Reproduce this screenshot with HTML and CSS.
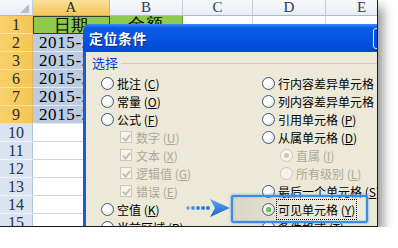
FILE: index.html
```html
<!DOCTYPE html>
<html>
<head>
<meta charset="utf-8">
<link rel="stylesheet" href="styles.css">
</head>
<body>
<div class="shot">
  <div class="sheet">
    <div class="hd corner"><span class="tri"></span></div>
    <div class="hd col sel">A</div>
    <div class="hd col">B</div>
    <div class="hd col">C</div>
    <div class="hd col">D</div>
    <div class="hd col">E</div>

    <div class="rh sel">1</div>
    <div class="c green boxed">日期</div>
    <div class="c green">金额</div>
    <div class="c"></div><div class="c"></div><div class="c"></div>

    <div class="rh sel">2</div>
    <div class="c selc">2015-2-1</div>
    <div class="c"></div><div class="c"></div><div class="c"></div><div class="c"></div>

    <div class="rh sel">3</div>
    <div class="c selc">2015-2-2</div>
    <div class="c"></div><div class="c"></div><div class="c"></div><div class="c"></div>

    <div class="rh sel">6</div>
    <div class="c selc">2015-2-5</div>
    <div class="c"></div><div class="c"></div><div class="c"></div><div class="c"></div>

    <div class="rh sel">7</div>
    <div class="c selc">2015-2-6</div>
    <div class="c"></div><div class="c"></div><div class="c"></div><div class="c"></div>

    <div class="rh sel">9</div>
    <div class="c selc">2015-2-8</div>
    <div class="c"></div><div class="c"></div><div class="c"></div><div class="c"></div>

    <div class="rh">10</div>
    <div class="c"></div><div class="c"></div><div class="c"></div><div class="c"></div><div class="c"></div>
    <div class="rh">11</div>
    <div class="c"></div><div class="c"></div><div class="c"></div><div class="c"></div><div class="c"></div>
    <div class="rh">12</div>
    <div class="c"></div><div class="c"></div><div class="c"></div><div class="c"></div><div class="c"></div>
    <div class="rh">13</div>
    <div class="c"></div><div class="c"></div><div class="c"></div><div class="c"></div><div class="c"></div>
    <div class="rh">14</div>
    <div class="c"></div><div class="c"></div><div class="c"></div><div class="c"></div><div class="c"></div>
    <div class="rh">15</div>
    <div class="c"></div><div class="c"></div><div class="c"></div><div class="c"></div><div class="c"></div>
  </div>

  <div class="dialog">
    <div class="title">
      <span class="title-text">定位条件</span>
      <span class="close"></span>
    </div>
    <div class="body">
      <div class="legend"><span class="legend-text">选择</span><span class="legend-line"></span></div>
      <div class="opts">
        <div class="col-left">
          <div class="opt"><span class="radio"></span><span>批注 (<u>C</u>)</span></div>
          <div class="opt"><span class="radio"></span><span>常量 (<u>O</u>)</span></div>
          <div class="opt"><span class="radio"></span><span>公式 (<u>F</u>)</span></div>
          <div class="opt sub dis"><span class="check"></span><span>数字 (<u>U</u>)</span></div>
          <div class="opt sub dis"><span class="check"></span><span>文本 (<u>X</u>)</span></div>
          <div class="opt sub dis"><span class="check"></span><span>逻辑值 (<u>G</u>)</span></div>
          <div class="opt sub dis"><span class="check"></span><span>错误 (<u>E</u>)</span></div>
          <div class="opt"><span class="radio"></span><span>空值 (<u>K</u>)</span></div>
          <div class="opt"><span class="radio"></span><span>当前区域 (<u>R</u>)</span></div>
        </div>
        <div class="col-right">
          <div class="opt"><span class="radio"></span><span>行内容差异单元格 (<u>W</u>)</span></div>
          <div class="opt"><span class="radio"></span><span>列内容差异单元格 (<u>M</u>)</span></div>
          <div class="opt"><span class="radio"></span><span>引用单元格 (<u>P</u>)</span></div>
          <div class="opt"><span class="radio"></span><span>从属单元格 (<u>D</u>)</span></div>
          <div class="opt sub2 dis"><span class="radio on-dis"></span><span>直属 (<u>I</u>)</span></div>
          <div class="opt sub2 dis"><span class="radio"></span><span>所有级别 (<u>L</u>)</span></div>
          <div class="opt"><span class="radio"></span><span>最后一个单元格 (<u>S</u>)</span></div>
          <div class="opt"><span class="radio on"></span><span class="focus">可见单元格 (<u>Y</u>)</span></div>
          <div class="opt"><span class="radio"></span><span>条件格式 (<u>T</u>)</span></div>
        </div>
      </div>
    </div>
  </div>

  <div class="callout"></div>
  <svg class="arrow" width="46" height="20" viewBox="0 0 46 20">
    <defs>
      <linearGradient id="ag" x1="0" y1="0" x2="0" y2="1">
        <stop offset="0" stop-color="#5aa6f0"/>
        <stop offset="1" stop-color="#1c64d4"/>
      </linearGradient>
    </defs>
    <circle cx="2" cy="10" r="1.8" fill="#5b9be6"/>
    <circle cx="7" cy="10" r="1.9" fill="#4a90e4"/>
    <circle cx="12" cy="10" r="2" fill="#3b86e0"/>
    <circle cx="17" cy="10" r="2" fill="#2f7cdc"/>
    <circle cx="22" cy="10" r="2" fill="#2a76da"/>
    <path d="M24 1 L44 10 L24 19 L29 10 Z" fill="url(#ag)"/>
  </svg>
</div>
</body>
</html>
```

FILE: styles.css
```css
html, body {
  margin: 0;
  padding: 0;
  background: #ffffff;
}

.shot {
  position: relative;
  box-sizing: border-box;
  width: 378px;
  height: 227px;
  overflow: hidden;
  border-right: 1px solid #1a1a1a;
  border-bottom: 1px solid #1a1a1a;
  box-shadow: 5px 7px 10px rgba(0, 0, 0, 0.42);
  background: #ffffff;
}

.sheet {
  display: grid;
  grid-template-columns: 33px 77px 73px 70px 73px 72px;
  grid-template-rows: 16px repeat(12, 18px);
  font-family: "Liberation Serif", serif;
  font-size: 17px;
  color: #000;
}

.sheet > div {
  box-sizing: border-box;
  border-right: 1px solid #d4d4d4;
  border-bottom: 1px solid #d4d4d4;
  overflow: hidden;
  white-space: nowrap;
  line-height: 17px;
}

.hd {
  background: linear-gradient(#f7f9fc, #e8edf4);
  border-right-color: #c4cddb !important;
  border-bottom-color: #a9b8cc !important;
  color: #2b3e57;
  font-size: 15px;
  line-height: 15px !important;
  text-align: center;
}

.corner {
  position: relative;
}

.tri {
  position: absolute;
  right: 3px;
  bottom: 2px;
  width: 0;
  height: 0;
  border-left: 9px solid transparent;
  border-bottom: 9px solid #b9bfc7;
}

.hd.sel {
  background: linear-gradient(#fbe09a, #f4c658);
  border-right-color: #e2b55a !important;
  border-bottom-color: #e2a94a !important;
  color: #2b2b2b;
}

.rh {
  background: #dae3ef;
  border-right-color: #b4c3d6 !important;
  border-bottom-color: #f2f5fa !important;
  color: #23374f;
  text-align: center;
  font-size: 16px;
}

.rh.sel {
  background: linear-gradient(90deg, #f8d06a, #f5c654);
  border-right-color: #e2b55a !important;
  border-bottom-color: #fbe2a4 !important;
  color: #2a2a2a;
}

.c {
  padding-left: 6px;
  letter-spacing: 0.6px;
}

.green {
  background: #8fca4e;
  text-align: center;
  padding-left: 0;
  border-right-color: #6f9c3b !important;
  border-bottom-color: #6f9c3b !important;
}

.boxed {
  border: 1px solid #3a3a3a !important;
}

.selc {
  background: #bccbdf;
  border-bottom-color: #e3e9f1 !important;
  border-right-color: #bccbdf !important;
}

/* dialog */
.dialog {
  position: absolute;
  left: 83px;
  top: 24px;
  width: 320px;
  height: 210px;
  display: flex;
  flex-direction: column;
  font-family: "Noto Sans CJK SC", "Noto Sans", sans-serif;
  font-size: 12px;
}

.title {
  position: relative;
  height: 28px;
  flex: none;
  border-radius: 7px 7px 0 0;
  background: linear-gradient(#3c8cf4 0%, #0a5ae8 14%, #0554e2 55%, #0347d4 100%);
  display: flex;
  align-items: center;
  padding-left: 6px;
}

.title-text {
  color: #ffffff;
  font-weight: bold;
  font-size: 14px;
  letter-spacing: 0.5px;
  text-shadow: 1px 1px 0 #0a2a80;
}

.close {
  position: absolute;
  left: 290px;
  top: 4px;
  width: 20px;
  height: 19px;
  border: 1px solid #dfe8fb;
  border-radius: 3px;
  background: #0b4fd6;
}

.body {
  flex: 1;
  background: #ece9d8;
  border-left: 3px solid #1a5bd9;
  padding-left: 6px;
  padding-top: 1px;
}

.legend {
  height: 18px;
  display: flex;
  align-items: center;
}

.legend-text {
  color: #0046d5;
  font-size: 13px;
  margin-right: 3px;
}

.legend-line {
  flex: 1;
  height: 0;
  border-top: 1px solid #d0d0bf;
  margin-top: 2px;
}

.opts {
  display: grid;
  grid-template-columns: 161px auto;
  padding-left: 9px;
  margin-top: 3px;
}

.opt {
  height: 18px;
  display: flex;
  align-items: center;
  white-space: nowrap;
  color: #000;
}

.opt u {
  text-decoration: underline;
}

.opt.sub {
  padding-left: 19px;
}

.opt.sub2 {
  padding-left: 18px;
}

.opt.dis {
  color: #aca899;
}

.radio {
  box-sizing: border-box;
  width: 13px;
  height: 13px;
  border-radius: 50%;
  border: 1px solid #3d5a7c;
  background: radial-gradient(circle at 35% 35%, #ffffff 30%, #dedbd0 100%);
  margin-right: 3px;
  flex: none;
  display: flex;
  align-items: center;
  justify-content: center;
}

.dis .radio {
  border-color: #cac8bb;
  background: #f4f3ee;
}

.radio.on::after,
.radio.on-dis::after {
  content: "";
  width: 5px;
  height: 5px;
  border-radius: 50%;
  background: radial-gradient(circle at 40% 40%, #7be07b, #1f9a1f);
}

.radio.on-dis::after {
  background: #cac8bb;
}

.check {
  box-sizing: border-box;
  width: 12px;
  height: 12px;
  border: 1px solid #cac8bb;
  background: #f4f3ee;
  margin-right: 4px;
  flex: none;
  position: relative;
}

.check::after {
  content: "";
  position: absolute;
  left: 3px;
  top: 1px;
  width: 3px;
  height: 6px;
  border-right: 2px solid #c2c0b2;
  border-bottom: 2px solid #c2c0b2;
  transform: rotate(40deg);
}

.focus {
  outline: 1px dotted #000;
  outline-offset: 1px;
}

.callout {
  position: absolute;
  left: 231px;
  top: 195px;
  box-sizing: border-box;
  width: 137px;
  height: 28px;
  border: 2px solid #3a8de2;
  border-radius: 2px;
  box-shadow: 0 0 3px rgba(58, 141, 226, 0.8), inset 0 0 2px rgba(58, 141, 226, 0.6);
  background: linear-gradient(90deg, rgba(150, 148, 130, 0.22), rgba(236, 233, 216, 0) 55%);
}

.arrow {
  position: absolute;
  left: 186px;
  top: 198px;
}
```
